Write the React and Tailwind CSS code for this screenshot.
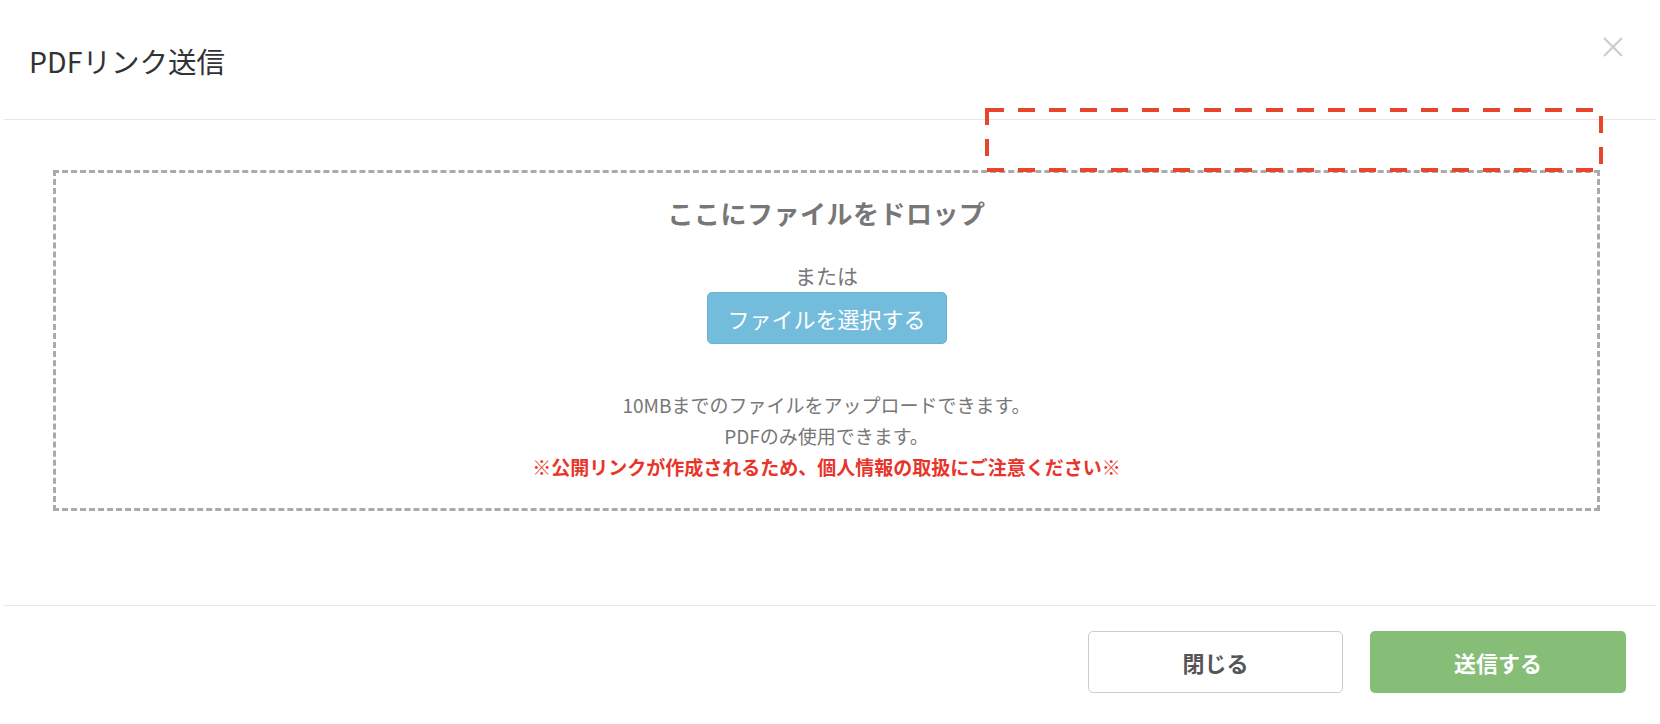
import React from "react";

export default function App() {
  return (
    <div
      className="relative w-[1660px] h-[724px] bg-white overflow-hidden"
      style={{ fontFamily: '"Noto Sans CJK JP", "Noto Sans", sans-serif' }}
    >
      {/* Header */}
      <div className="relative h-[120px] mx-[4px] border-b border-[#e6e6e6] flex items-center">
        <h1 className="pl-[25px] pt-[2px] text-[28.5px] leading-[42px] font-normal text-[#333]">
          PDFリンク送信
        </h1>
        <button className="absolute top-[37px] right-[33px] w-[20px] h-[20px] text-[#cccccc]">
          <svg viewBox="0 0 20 20" width="20" height="20" fill="none" stroke="currentColor" strokeWidth="2.2">
            <path d="M1 1 L19 19 M19 1 L1 19" />
          </svg>
        </button>
      </div>

      {/* Body */}
      <div className="pt-[50px] pb-[94px]">
        <div className="ml-[53px] w-[1547px] h-[341px] border-[3px] border-dashed border-[#aaaaaa] flex flex-col items-center pt-[20px]">
          <p className="text-[26px] leading-[39px] font-bold text-[#777777] tracking-[0.5px]">
            ここにファイルをドロップ
          </p>
          <p className="mt-[28px] text-[21px] leading-[30px] text-[#777777]">または</p>
          <button className="mt-[2px] w-[240px] h-[52px] rounded-[5px] bg-[#74bcdb] border border-[#69b3d3] text-white text-[22px] leading-none">
            ファイルを選択する
          </button>
          <div className="mt-[45px] flex flex-col items-center text-[19px] leading-[31px] text-[#777777]">
            <p>10MBまでのファイルをアップロードできます。</p>
            <p>PDFのみ使用できます。</p>
            <p className="font-bold text-[#e8352b]">
              ※公開リンクが作成されるため、個人情報の取扱にご注意ください※
            </p>
          </div>
        </div>
      </div>

      {/* Footer */}
      <div className="mx-[4px] border-t border-[#e6e6e6] flex justify-end gap-[27px] pt-[25px] pr-[30px]">
        <button className="w-[255px] h-[62px] rounded-[5px] border border-[#cccccc] bg-white text-[22px] font-bold text-[#555555]">
          閉じる
        </button>
        <button className="w-[256px] h-[62px] rounded-[5px] bg-[#86bd77] text-[22px] font-bold text-white">
          送信する
        </button>
      </div>

      {/* Red annotation overlay */}
      <svg
        className="absolute left-[985px] top-[108px] pointer-events-none"
        width="618"
        height="64"
        viewBox="0 0 618 64"
        fill="none"
      >
        <rect x="2" y="2" width="614" height="60" stroke="#e9452c" strokeWidth="4" strokeDasharray="17 14" />
      </svg>
    </div>
  );
}
